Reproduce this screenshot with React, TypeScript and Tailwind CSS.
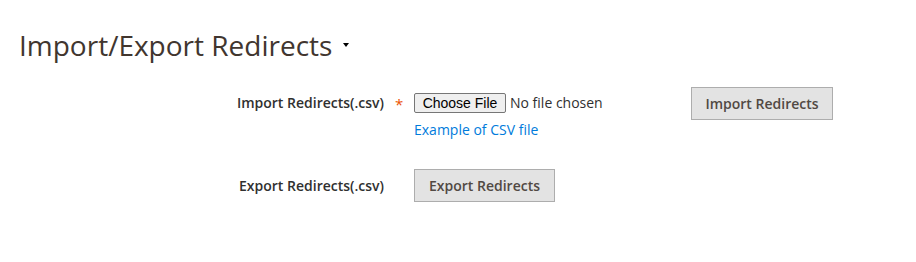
import React from 'react'

const font = { fontFamily: '"Open Sans", "Liberation Sans", sans-serif' }

export default function App() {
  return (
    <div className="w-[916px] h-[262px] bg-white font-['Open_Sans',sans-serif]">
      {/* Page title */}
      <div className="pt-[28px] pl-[19px] flex items-center">
        <h1 className="text-[28px] leading-[34px] font-normal text-[#41362f]">Import/Export Redirects</h1>
        <span className="ml-[11px] w-0 h-0 border-l-[3.5px] border-r-[3.5px] border-t-[4px] border-l-transparent border-r-transparent border-t-[#000]" />
      </div>

      {/* Import row */}
      <div className="mt-[25px] flex items-start">
        <div className="w-[384px] pt-[6px] text-right text-[14px] leading-[20px] font-semibold text-[#303030]">
          Import Redirects(.csv)
        </div>
        <div className="w-[30px] pl-[11px] pt-[7px] text-[15px] leading-[20px] text-[#eb5202]">*</div>
        <div className="w-[277px] pt-[6px]">
          <div className="flex items-center">
            <button className="w-[92px] h-[20px] bg-[#efefef] border border-[#767676] rounded-[2px] text-[14px] leading-[16px] text-black font-['Liberation_Sans',sans-serif]">
              Choose File
            </button>
            <span className="ml-[4px] text-[14px] leading-[20px] text-[#303030]">No file chosen</span>
          </div>
          <a className="block mt-[7px] text-[14px] leading-[20px] text-[#007bdb]" href="#">
            Example of CSV file
          </a>
        </div>
        <button className="w-[142px] h-[33px] bg-[#e3e3e3] border border-[#adadad] text-[14px] font-semibold text-[#514943]" style={font}>
          Import Redirects
        </button>
      </div>

      {/* Export row */}
      <div className="mt-[29px] flex items-center">
        <div className="w-[384px] text-right text-[14px] leading-[20px] font-semibold text-[#303030]">
          Export Redirects(.csv)
        </div>
        <div className="w-[30px]" />
        <button className="w-[141px] h-[33px] bg-[#e3e3e3] border border-[#adadad] text-[14px] font-semibold text-[#514943]" style={font}>
          Export Redirects
        </button>
      </div>
    </div>
  )
}
